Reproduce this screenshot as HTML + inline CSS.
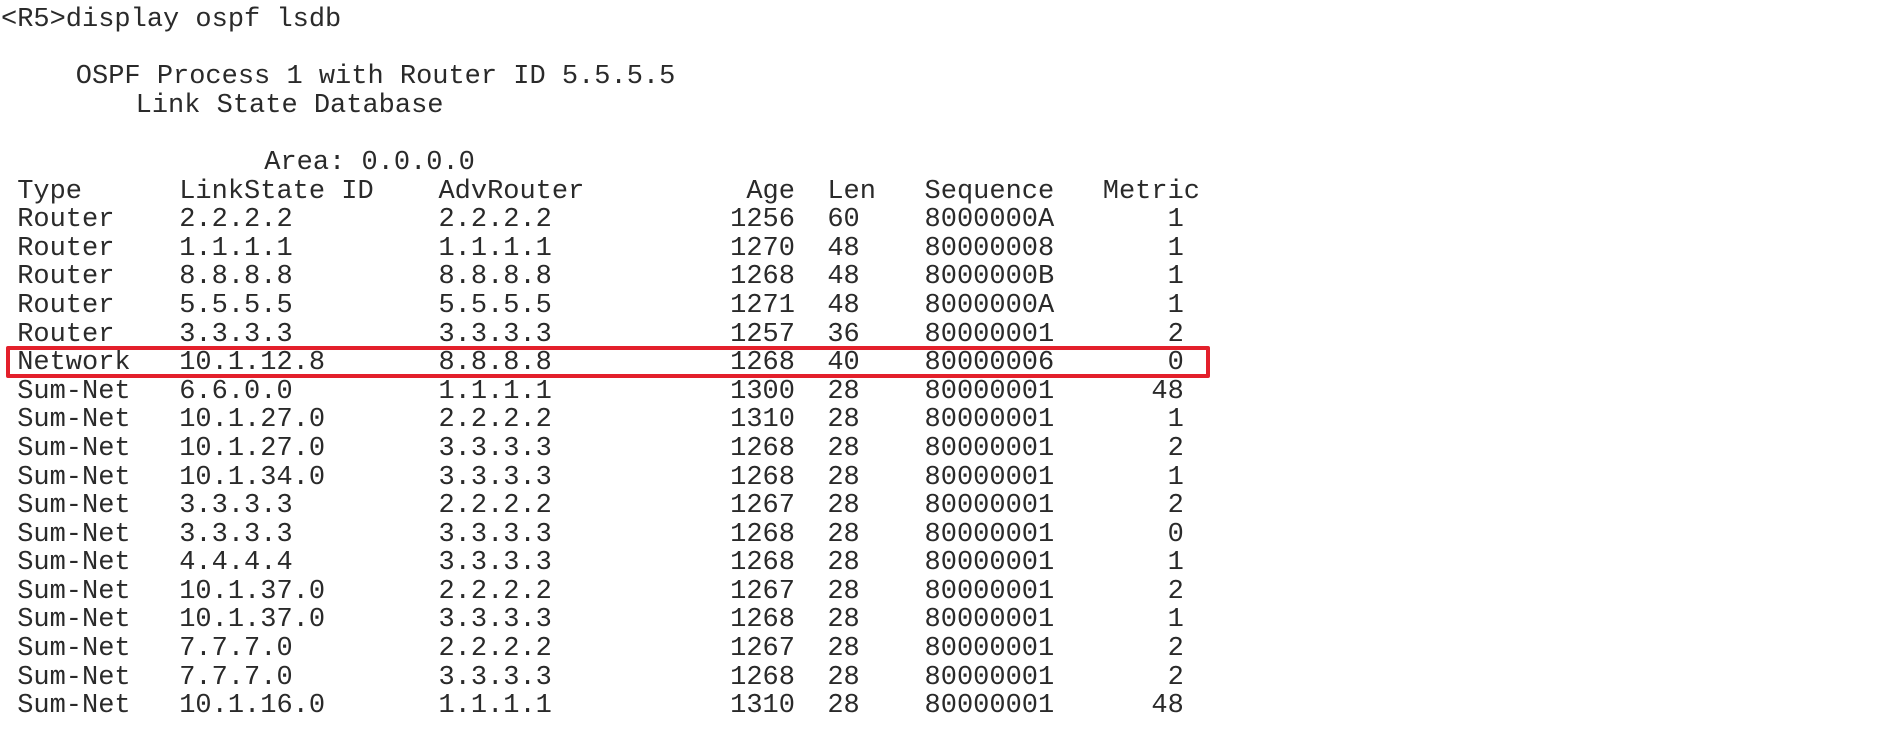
<!DOCTYPE html>
<html><head><meta charset="utf-8"><style>
html,body{margin:0;padding:0;background:#fff;width:1887px;height:732px;overflow:hidden;position:relative}
pre{position:absolute;left:1px;top:6px;margin:0;font-family:"Liberation Mono","Courier New",monospace;font-size:27px;line-height:28.6px;color:#2a2a2a;white-space:pre}
.s{position:relative}
.box{position:absolute;left:6px;top:346px;width:1196px;height:24px;border:4px solid #e3202b;border-radius:2px}
</style></head><body>
<pre>&lt;R5&gt;display ospf lsdb

<span class="s" style="left:10px">    OSPF Process 1 with Router ID 5.5.5.5</span>
<span class="s" style="left:5px">        Link State Database</span>

<span class="s" style="left:4px">                Area: 0.0.0.0</span>
 Type      LinkState ID    AdvRouter          Age  Len   Sequence   Metric
 Router    2.2.2.2         2.2.2.2           1256  60    8000000A       1
 Router    1.1.1.1         1.1.1.1           1270  48    80000008       1
 Router    8.8.8.8         8.8.8.8           1268  48    8000000B       1
 Router    5.5.5.5         5.5.5.5           1271  48    8000000A       1
 Router    3.3.3.3         3.3.3.3           1257  36    80000001       2
 Network   10.1.12.8       8.8.8.8           1268  40    80000006       0
 Sum-Net   6.6.0.0         1.1.1.1           1300  28    80000001      48
 Sum-Net   10.1.27.0       2.2.2.2           1310  28    80000001       1
 Sum-Net   10.1.27.0       3.3.3.3           1268  28    80000001       2
 Sum-Net   10.1.34.0       3.3.3.3           1268  28    80000001       1
 Sum-Net   3.3.3.3         2.2.2.2           1267  28    80000001       2
 Sum-Net   3.3.3.3         3.3.3.3           1268  28    80000001       0
 Sum-Net   4.4.4.4         3.3.3.3           1268  28    80000001       1
 Sum-Net   10.1.37.0       2.2.2.2           1267  28    80000001       2
 Sum-Net   10.1.37.0       3.3.3.3           1268  28    80000001       1
 Sum-Net   7.7.7.0         2.2.2.2           1267  28    80000001       2
 Sum-Net   7.7.7.0         3.3.3.3           1268  28    80000001       2
 Sum-Net   10.1.16.0       1.1.1.1           1310  28    80000001      48</pre>
<div class="box"></div>
</body></html>
